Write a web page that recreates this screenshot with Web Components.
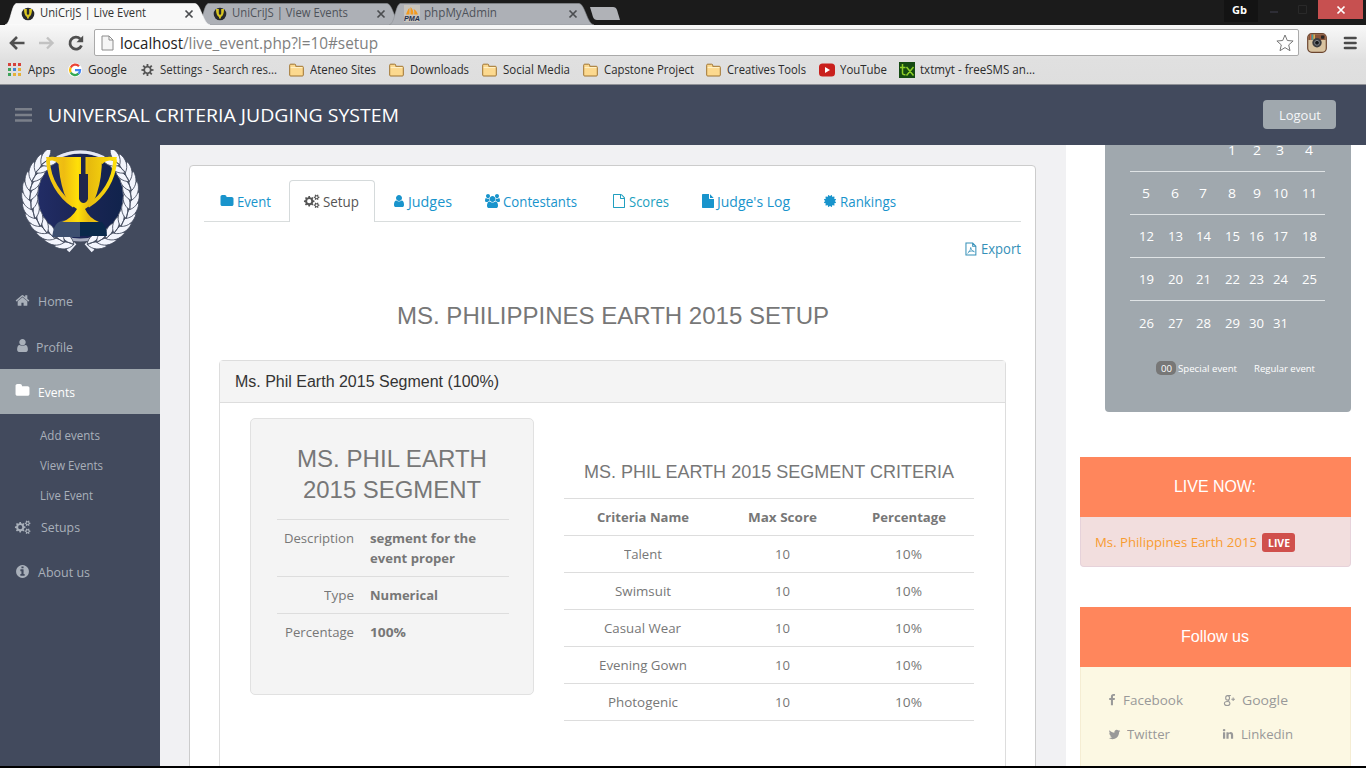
<!DOCTYPE html>
<html lang="en">
<head>
<meta charset="utf-8">
<title>UniCriJS | Live Event</title>
<style>
html,body{margin:0;height:100%;overflow:hidden;background:#000}
body{font-family:"Open Sans","Noto Sans",sans-serif;font-size:13px;color:#777}
</style>
</head>
<body>
<app-window></app-window>
<script>
const PATHS={
folder:'M1728 608v704q0 92-66 158t-158 66H288q-92 0-158-66t-66-158V352q0-92 66-158t158-66h320q92 0 158 66t66 158v32h672q92 0 158 66t66 158z',
home:'M1472 992v480q0 26-19 45t-45 19h-384v-384h-256v384h-384q-26 0-45-19t-19-45v-480q0-1 .5-3t.5-3l575-474 575 474q1 2 1 6zm223-69l-62 74q-8 9-21 11h-3q-13 0-21-7l-692-577-692 577q-12 8-24 7-13-2-21-11l-62-74q-8-10-7-23.5t11-21.5l719-599q32-26 76-26t76 26l244 204v-195q0-14 9-23t23-9h192q14 0 23 9t9 23v408l219 182q10 8 11 21.5t-7 23.5z',
user:'M1536 1399q0 109-62.5 187t-150.5 78h-854q-88 0-150.5-78t-62.5-187q0-85 8.5-160.5t31.5-152 58.5-131 94-89 134.5-34.5q131 128 313 128t313-128q76 0 134.5 34.5t94 89 58.5 131 31.5 152 8.5 160.5zm-256-887q0 159-112.5 271.5t-271.5 112.5-271.5-112.5-112.5-271.5 112.5-271.5 271.5-112.5 271.5 112.5 112.5 271.5z',
users:'M593 896q-162 5-265 128h-134q-82 0-138-40.5t-56-118.5q0-353 124-353 6 0 43.5 21t97.5 42.5 119 21.5q67 0 133-23-5 37-5 66 0 139 81 256zm1071 637q0 120-73 189.5t-194 69.5h-874q-121 0-194-69.5t-73-189.5q0-53 3.5-103.5t14-109 26.5-108.5 43-97.5 62-81 85.5-53.5 111.5-20q10 0 43 21.5t73 48 107 48 135 21.5 135-21.5 107-48 73-48 43-21.5q61 0 111.5 20t85.5 53.5 62 81 43 97.5 26.5 108.5 14 109 3.5 103.5zm-1024-1277q0 106-75 181t-181 75-181-75-75-181 75-181 181-75 181 75 75 181zm704 384q0 159-112.5 271.5t-271.5 112.5-271.5-112.5-112.5-271.5 112.5-271.5 271.5-112.5 271.5 112.5 112.5 271.5zm576 225q0 78-56 118.5t-138 40.5h-134q-103-123-265-128 81-117 81-256 0-29-5-66 66 23 133 23 59 0 119-21.5t97.5-42.5 43.5-21q124 0 124 353zm-128-609q0 106-75 181t-181 75-181-75-75-181 75-181 181-75 181 75 75 181z',
file:'M1152 512v-472q22 14 36 28l408 408q14 14 28 36h-472zm-128 32q0 40 28 68t68 28h544v1056q0 40-28 68t-68 28h-1344q-40 0-68-28t-28-68v-1600q0-40 28-68t68-28h800v544z',
fileo:'M1596 380q28 28 48 76t20 88v1152q0 40-28 68t-68 28h-1344q-40 0-68-28t-28-68v-1600q0-40 28-68t68-28h896q40 0 88 20t76 48zm-444-244v376h376q-10-29-22-41l-313-313q-12-12-41-22zm384 1528v-1024h-416q-40 0-68-28t-28-68v-416h-768v1536h1280z',
cert:'M1504 896l138 135q30 28 20 70-12 41-52 51l-188 48 53 186q12 41-19 70-29 31-70 19l-186-53-48 188q-10 40-51 52-12 2-19 2-31 0-51-22l-135-138-135 138q-28 30-70 20-41-11-51-52l-48-188-186 53q-41 12-70-19-31-29-19-70l53-186-188-48q-40-10-52-51-10-42 20-70l138-135-138-135q-30-28-20-70 12-41 52-51l188-48-53-186q-12-41 19-70 29-31 70-19l186 53 48-188q10-41 51-51 41-12 70 19l135 139 135-139q29-30 70-19 41 10 51 51l48 188 186-53q41-12 70 19 31 29 19 70l-53 186 188 48q40 10 52 51 10 42-20 70z',
info:'M1152 1376v-160q0-14-9-23t-23-9h-96v-512q0-14-9-23t-23-9h-320q-14 0-23 9t-9 23v160q0 14 9 23t23 9h96v320h-96q-14 0-23 9t-9 23v160q0 14 9 23t23 9h448q14 0 23-9t9-23zm-128-896v-160q0-14-9-23t-23-9h-192q-14 0-23 9t-9 23v160q0 14 9 23t23 9h192q14 0 23-9t9-23zm640 416q0 209-103 385.5t-279.5 279.5-385.5 103-385.5-103-279.5-279.5-103-385.5 103-385.5 279.5-279.5 385.5-103 385.5 103 279.5 279.5 103 385.5z',
facebook:'M1343 12v264h-157q-86 0-116 36t-30 108v189h293l-39 296h-254v759h-306v-759h-255v-296h255v-218q0-186 104-288.5t277-102.5q147 0 228 12z',
twitter:'M1684 408q-67 98-162 167 1 14 1 42 0 130-38 259.5t-115.5 248.5-184.5 210.5-258 146-323 54.5q-271 0-496-145 35 4 78 4 225 0 401-138-105-2-188-64.5t-114-159.5q33 5 61 5 43 0 85-11-112-23-185.5-111.5t-73.5-205.5v-4q68 38 146 41-66-44-105-115t-39-154q0-88 44-163 121 149 294.5 238.5t371.5 99.5q-8-38-8-74 0-134 94.5-228.5t228.5-94.5q140 0 236 102 109-21 205-78-37 115-142 178 93-10 186-50z',
linkedin:'M477 625v991h-330v-991h330zm21-306q1 73-50.5 122t-135.5 49h-2q-82 0-132-49t-50-122q0-74 51.5-122.5t134.5-48.5 133 48.5 51 122.5zm1166 729v568h-329v-530q0-105-40.5-164.5t-126.5-59.5q-63 0-105.5 34.5t-63.5 85.5q-11 30-11 81v553h-329q2-399 2-647t-1-296l-1-48h329v144h-2q20-32 41-56t56.5-52 87-43.5 114.5-15.5q171 0 275 113.5t104 332.5z'};
function cog(cx,cy,ri,ro,hole,n){
  let d='';const p=(r,a)=>(cx+r*Math.cos(a)).toFixed(2)+' '+(cy+r*Math.sin(a)).toFixed(2);
  for(let i=0;i<n;i++){const a=i*2*Math.PI/n,s=Math.PI/n;
    d+=(i?'L':'M')+p(ri,a-s*.6)+'L'+p(ro,a-s*.36)+'L'+p(ro,a+s*.36)+'L'+p(ri,a+s*.6);}
  return d+`ZM${cx+hole} ${cy}A${hole} ${hole} 0 1 0 ${cx-hole} ${cy}A${hole} ${hole} 0 1 0 ${cx+hole} ${cy}Z`;
}
const DRAWN={
cogs:`<path fill-rule="evenodd" d="${cog(5.2,7.2,4.1,5.3,2.1,8)}${cog(12.6,3.3,2.1,2.9,1.05,6)}${cog(12.6,11.2,2.1,2.9,1.05,6)}"/>`,
cog:`<path fill-rule="evenodd" d="${cog(8,7,4.4,6.6,2.6,8)}"/>`,
pdf:`<path fill="none" stroke="currentColor" stroke-width="1.1" d="M2.1.6h7.2l3.4 3.4v9.4H2.1zM9.3.6V4h3.4"/><path fill="none" stroke="currentColor" stroke-width=".8" d="M3.7 11.700c1.500-.7 3.200-3.200 3.500-6.400.7 3 2 4.300 4.200 4.800M4.600 10.100c2-.9 4-1.200 6.200-.7"/>`,
gplus:`<g fill="none" stroke="currentColor" stroke-width="1.25"><ellipse cx="5.3" cy="4" rx="2.2" ry="2.6"/><ellipse cx="4.8" cy="10.4" rx="3.2" ry="2.3"/><path d="M5 1.2h4M6.2 6.3l1 2M9.6 5.6h4.2M11.7 3.5v4.2"/></g>`
};
function define(name,css,html,after){
  const t=document.createElement('template');
  t.innerHTML=`<style>*{box-sizing:border-box}${css}</style>${html}`;
  customElements.define(name,class extends HTMLElement{
    connectedCallback(){
      if(this.shadowRoot)return;
      this.attachShadow({mode:'open'}).append(document.importNode(t.content,true));
      if(after)after(this,this.shadowRoot);
    }
  });
}

define('fa-icon',`:host{display:inline-block;flex:none;line-height:0}svg{display:block;width:100%;height:100%;fill:currentColor;overflow:visible}`,`<svg></svg>`,(el,r)=>{
  const n=el.getAttribute('name'),s=+(el.getAttribute('size')||14),w=n==='users'?1920:1792,svg=r.querySelector('svg');
  el.style.width=(PATHS[n]?s*w/1792:n==='cogs'?s*16/14:s)+'px';el.style.height=s+'px';
  svg.setAttribute('viewBox',PATHS[n]?`0 0 ${w} 1792`:n==='cogs'?'0 0 16 14':'0 0 15 14');
  svg.innerHTML=PATHS[n]?`<path d="${PATHS[n]}"/>`:DRAWN[n];
});

define('trophy-mark',`:host{display:block;width:14px;height:14px;flex:none}svg{display:block;width:100%;height:100%}`,
`<svg viewBox="0 0 14 14"><circle cx="7" cy="7" r="6.3" fill="#26282d"/><path d="M3 2h2.8v4.6a1.2 1.2 0 0 0 2.4 0V2H11c0 4.500-1 7-3.100 8v1.500H6V10C4 9 3 6.500 3 2z" fill="#d8c521"/></svg>`);

define('browser-tab',`:host{display:flex;position:relative;width:205px;height:22px;margin-left:-13px;flex:none;align-items:center;color:#4d5259;font-size:12px;--dy:-.6px}
:host(:first-of-type){margin-left:0}:host([active]){z-index:2;color:#333}
.bg{position:absolute;inset:0;width:205px;height:22px}.bg path{fill:#adb0b6;stroke:#8d9096;stroke-width:.6}
:host([active]) .bg path{fill:#f8f8f8;stroke:#fff}
.c{position:relative;display:flex;align-items:center;width:100%;padding:0 15px 1px 16px;gap:5px}.x{margin-left:auto;width:12px;height:12px}.x path{stroke:#4b4d50;stroke-width:1.7}`,
`<svg class="bg" viewBox="0 0 205 22"><path d="M0 22C6 21 6 3 11 .5H190C196 1 198 21 205 22z"/></svg><div class="c"><slot name="icon"></slot><slot></slot><svg class="x" viewBox="0 0 12 12"><path d="M2.500 2.500l7 7M9.500 2.500l-7 7"/></svg></div>`);

define('bookmark-item',`:host{display:flex;align-items:center;flex:none;gap:var(--gap,6px);margin-left:var(--ml,13px)}svg{display:none;flex:none}:host([folder]) svg{display:block}`,
`<slot name="icon"></slot><svg width="15" height="14" viewBox="0 0 15 14"><path d="M.7 12V2.200q0-1 1-1h4q1 0 1 1V3.300h6.600q1 0 1 1V12q0 1-1 1H1.700q-1 0-1-1z" fill="#fcd98f" stroke="#a07430"/><path d="M1.700 4.600h11.600" stroke="#fff2cc"/></svg><slot></slot>`);

define('browser-chrome',`:host{display:flex;flex-direction:column;height:85px;color:#2b2b2b;font-size:12px;background:linear-gradient(#f8f8f8 25px,#e0e0e0 60px,#dedede 84px)}
.strip{display:flex;height:25px;background:#1b1b1b;padding:3px 3px 0 5px;flex:none}
.new{width:31px;height:15px;margin:3px 0 0 -5px}
.win{margin:-3px 0 0 auto;display:flex;height:19px;color:#fff}
.gb{width:34px;height:22px;background:#131313;font-weight:700;font-size:11px;display:flex;justify-content:center;align-items:center;padding-bottom:3px}
.dim{width:29px;height:19px}.dim+.dim{width:31px}.close{width:45px;height:19px;background:#c75050;display:grid;place-items:center}
.bar{display:flex;height:32px;flex:none;align-items:center;padding:3px 9px 0 8px}
.nav{display:block;flex:none}
.url{flex:none;width:1205px;height:27px;margin-left:9px;border:1px solid #aaa;border-radius:2px;background:#fff;display:flex;align-items:center;padding:0 4px 0 6px;font-size:16px;color:#808080;--dy:-.5px}
.url b{font-weight:400;color:#222}.url .star{margin-left:auto}
.ext{margin-left:8px}.menu{margin-left:16px}
.marks{display:flex;align-items:center;height:28px;flex:1;padding:0 0 2px 8px;border-bottom:1px solid #8f9196}`,
`<div class="strip">
<browser-tab active><trophy-mark slot="icon"></trophy-mark><fit-text w="106">UniCriJS | Live Event</fit-text></browser-tab>
<browser-tab><trophy-mark slot="icon"></trophy-mark><fit-text w="116">UniCriJS | View Events</fit-text></browser-tab>
<browser-tab><svg slot="icon" width="16" height="17" viewBox="0 0 16 17" style="margin:0 -1px 0 -1px"><rect width="16" height="17" fill="#c8c4bd"/><path d="M2 9.500C3 7 4 4 5.500 3v6.500zM6.500 9.500V2C9 4 9.500 7 9.300 9.500zM10.200 9.500C10.500 7 10 5 9.500 4c2.500 1 3.500 3 4.500 5.500z" fill="#f29a1f"/><text x="0" y="16" font-family="Liberation Sans" font-weight="700" font-style="italic" font-size="6.800" fill="#25304f" textLength="16" lengthAdjust="spacingAndGlyphs">PMA</text></svg><fit-text w="73">phpMyAdmin</fit-text></browser-tab>
<svg class="new" viewBox="0 0 31 15"><path d="M1 1h23q3 0 4 3l3 10H8q-3 0-4-3z" fill="#b0b2b7"/></svg>
<div class="win"><div class="gb"><fit-text w="15" style="margin-right:3px">Gb</fit-text></div><svg class="dim" viewBox="0 0 29 19"><path d="M12 12h8" stroke="#2d2d35" stroke-width="2"/></svg><svg class="dim" viewBox="0 0 29 19"><path d="M10.500 5.500h8v8h-8z" fill="none" stroke="#292929"/></svg><div class="close"><svg width="10" height="10" viewBox="0 0 10 10"><path d="M1.500 1.500l7 7M8.500 1.500l-7 7" stroke="#fff" stroke-width="1.700"/></svg></div></div>
</div>
<div class="bar">
<svg class="nav" width="18" height="16" viewBox="0 0 18 16"><path d="M16.500 8H3.500M9 2L3 8l6 6" fill="none" stroke="#505050" stroke-width="2.600"/></svg>
<svg class="nav" style="margin-left:13px" width="16" height="16" viewBox="0 0 16 16"><path d="M0 8h13M8 2.500L13.500 8 8 13.500" fill="none" stroke="#c2c2c2" stroke-width="2.400"/></svg>
<svg class="nav" style="margin-left:12px" width="18" height="18" viewBox="0 0 18 18"><path d="M14.500 11.500A6 6 0 1 1 13.300 5" fill="none" stroke="#4f4f4f" stroke-width="2.800"/><path d="M16.200 1.500v6.800H9.500z" fill="#4f4f4f"/></svg>
<div class="url"><svg width="13" height="16" viewBox="0 0 13 16" style="margin-right:6px"><path d="M1 1h7l4 4v10H1zM8 1v4h4" fill="#f5f5f5" stroke="#8c8c8c"/></svg><b><fit-text w="63">localhost</fit-text></b><fit-text w="195">/live_event.php?l=10#setup</fit-text>
<svg class="star" width="18" height="18" viewBox="0 0 18 18"><path d="M9 1l2.300 5.500 5.800.5-4.400 3.900 1.300 5.800L9 13.600l-5 3.100 1.300-5.800L.9 7l5.800-.5z" fill="#fff" stroke="#777" stroke-linejoin="round"/></svg></div>
<svg class="ext" width="20" height="20" viewBox="0 0 20 20"><rect x=".7" y=".7" width="18.600" height="18.600" rx="4" fill="#d8c3a0" stroke="#6c4630" stroke-width="1.200"/><path d="M1.300 7V4q0-2.700 3-2.700h11.400q3 0 3 2.700v3z" fill="#89543a"/><path d="M3 1.500h1.400V7H3z" fill="#d65d3d"/><path d="M4.400 1.500h2V7h-2z" fill="#4e9a9a"/><path d="M6.400 1.500H8V7H6.400z" fill="#d9b052"/><rect x="14" y="2.500" width="3.300" height="3.300" rx=".8" fill="#2a2523"/><circle cx="10" cy="9.800" r="4.700" fill="#3d3d40"/><circle cx="10" cy="9.800" r="2.400" fill="#15171a" stroke="#82878d"/></svg>
<svg class="menu" width="14" height="14" viewBox="0 0 14 14"><path d="M2 2h10.500M2 7h10.500M2 12h10.500" stroke="#4a4a4a" stroke-width="2.700" stroke-linecap="round"/></svg>
</div>
<div class="marks">
<bookmark-item style="--ml:0px"><svg slot="icon" width="14" height="14" viewBox="0 0 14 14"><g fill="#d5423b"><path d="M0 0h3v3H0zM5 0h3v3H5zM10 0h3v3h-3z"/></g><path d="M0 5h3v3H0z" fill="#3fa35b"/><path d="M5 5h3v3H5z" fill="#4285d4"/><path d="M10 5h3v3h-3zM5 10h3v3H5zM10 10h3v3h-3z" fill="#e5b13a"/><path d="M0 10h3v3H0z" fill="#3fa35b"/></svg><fit-text w="27">Apps</fit-text></bookmark-item>
<bookmark-item><svg slot="icon" width="14" height="14" viewBox="0 0 14 14"><circle cx="7" cy="7" r="7" fill="#fff"/><g fill="none" stroke-width="2.300"><path d="M11 3.200A5 5 0 0 0 2.700 4.600" stroke="#ea4335"/><path d="M2.700 4.600a5 5 0 0 0 0 4.900" stroke="#fbbc05"/><path d="M2.700 9.500A5 5 0 0 0 10.500 10.700" stroke="#34a853"/><path d="M10.500 10.700A5 5 0 0 0 12 7.200H7" stroke="#4285f4"/></g></svg><fit-text w="39">Google</fit-text></bookmark-item>
<bookmark-item style="--ml:13px;--gap:6px;color:#333"><fa-icon slot="icon" name="cog" style="color:#555"></fa-icon><fit-text w="117">Settings - Search res...</fit-text></bookmark-item>
<bookmark-item folder style="--ml:12px"><fit-text w="66">Ateneo Sites</fit-text></bookmark-item>
<bookmark-item folder><fit-text w="59">Downloads</fit-text></bookmark-item>
<bookmark-item folder><fit-text w="67">Social Media</fit-text></bookmark-item>
<bookmark-item folder><fit-text w="90">Capstone Project</fit-text></bookmark-item>
<bookmark-item folder style="--ml:12px"><fit-text w="79">Creatives Tools</fit-text></bookmark-item>
<bookmark-item style="--gap:5px"><svg slot="icon" width="16" height="16" viewBox="0 0 16 16"><rect y="1.500" width="16" height="13" rx="3.500" fill="#c9201d"/><path d="M6 5l5 3-5 3z" fill="#fff"/></svg><fit-text w="47">YouTube</fit-text></bookmark-item>
<bookmark-item style="--ml:12px;--gap:5px"><svg slot="icon" width="16" height="16" viewBox="0 0 16 16"><rect width="16" height="16" fill="#154a12"/><path d="M3.500 2v9q0 2 3 1.800M1 5.500h5.500M7.500 5l7 8.500M14.500 5l-7 8.500" stroke="#8fd028" stroke-width="1.500" fill="none"/></svg><fit-text w="115">txtmyt - freeSMS an...</fit-text></bookmark-item>
</div>`);

define('app-header',`:host{display:flex;align-items:center;height:60px;background:#424a5d;color:#fff;padding:0 30px 1px 15px;font-size:19px;--dy:-.5px}
.btn{margin-left:auto;width:73px;height:29px;border-radius:4px;background:#a0a8ae;display:grid;place-items:center;font-size:13px;color:#f4f6f8;--dy:0px}`,
`<svg width="17" height="14" viewBox="0 0 17 14" style="margin-right:16px"><path d="M0 1.300h17M0 7h17M0 12.500h17" stroke="#7b808a" stroke-width="2.400"/></svg><fit-text w="351">UNIVERSAL CRITERIA JUDGING SYSTEM</fit-text><div class="btn"><fit-text w="42">Logout</fit-text></div>`);

define('trophy-crest',`:host{display:block;width:118px;height:104px}svg{display:block}`,
`<svg width="118" height="104" viewBox="0 0 118 104"><defs><linearGradient id="n" x1="0" x2="1"><stop stop-color="#222d66"/><stop offset=".5" stop-color="#1b2555"/><stop offset="1" stop-color="#10234c"/></linearGradient><linearGradient id="y" gradientUnits="userSpaceOnUse" x1="25" y1="0" x2="96" y2="0"><stop stop-color="#f6cf10"/><stop offset=".25" stop-color="#eebc12"/><stop offset=".45" stop-color="#ffe008"/><stop offset=".6" stop-color="#e6b90e"/><stop offset="1" stop-color="#ffe20c"/></linearGradient></defs>
<circle cx="59.500" cy="46" r="44" fill="url(#n)" stroke="#a9aec0" stroke-width="3"/><path d="M36 7.500q23-11 47 0" fill="none" stroke="#e6e9f5" stroke-width="3"/>
<path d="M54 93l-7 8M65 93l7 8" fill="none" stroke="#eef1fb" stroke-width="3.600"/>
<g id="wreath"></g>
<path d="M32 82q2-12 14-12h13v17H31z" fill="#3d4f70"/><path d="M59 72h22q5 6 5 14H59z" fill="#09294b"/>
<path d="M39 13C36 8 27 7 27 11C28 29 38 46 53 56M80 13C83 8 94 7 94 11C93 29 83 46 67 56" fill="none" stroke="url(#y)" stroke-width="3.800"/><path d="M25 7h14v3H26zM80 7h16l-1 3H80z" fill="url(#y)"/>
<path d="M37 7H81Q81 28 76 43Q73 54 64 59Q68 68 78 72H41Q51 68 56 59Q47 54 43 43Q38 28 37 7z" fill="url(#y)"/>
<path d="M60 6.500h4.500V24h2.500v25q-1.500 4-4.500 4T58 49V24h2z" fill="#20264c"/></svg>`,(el,r)=>{
  let s='';
  for(let i=0;i<12;i++){
    const deg=106+i*11.200,a=deg*Math.PI/180,cx=59+49.500*Math.cos(a),cy=46+47.500*Math.sin(a);
    s+=`<g transform="translate(${cx} ${cy}) rotate(${deg+184})"><path d="M0 8C-7 5-10-2-8.500-10C-2-7 1 0 0 8zM0 8C-1 2 1-5 6-9C9-3 6 5 0 8z"/></g>`;
  }
  r.querySelector('#wreath').innerHTML=`<g fill="#f3f5fd" stroke="#424a5d" stroke-width=".8">${s}<g transform="translate(119 0) scale(-1 1)">${s}</g></g>`;
});

define('side-item',`:host{display:flex;align-items:center;height:45px;padding-left:14.500px;color:#a9b0ba;font-size:13px}:host([up]){--dy:-1px}:host([active]){background:#a0a8ae;color:#fff}:host([sub]){height:30px;padding-left:40px;font-size:12px;--dy:-1px}fa-icon{margin-top:-2px}`,`<slot></slot>`,(el,r)=>{
  const n=el.getAttribute('icon');
  if(n){const i=document.createElement('fa-icon');i.setAttribute('name',n);i.setAttribute('size',n==='cogs'?14:15);i.style.marginRight=(el.getAttribute('gap')||8.500)+'px';r.insertBefore(i,r.querySelector('slot'));}
});
define('app-sidebar',`:host{display:block;width:160px;background:#424a5d;height:100%}
trophy-crest{margin:5px 0 0 21px}nav{margin-top:25px}.sub{height:91px;padding-top:7px}`,
`<trophy-crest></trophy-crest><nav>
<side-item icon="home" up><fit-text w="35">Home</fit-text></side-item>
<side-item icon="user" gap="6.500"><fit-text w="37">Profile</fit-text></side-item>
<side-item icon="folder" active><fit-text w="37">Events</fit-text></side-item>
<div class="sub"><side-item sub><fit-text w="60">Add events</fit-text></side-item><side-item sub><fit-text w="63">View Events</fit-text></side-item><side-item sub><fit-text w="53">Live Event</fit-text></side-item></div>
<side-item icon="cogs" gap="10" up><fit-text w="39">Setups</fit-text></side-item>
<side-item icon="info" gap="8" up><fit-text w="52">About us</fit-text></side-item></nav>`);

define('nav-tab',`:host{display:flex;align-items:center;height:42px;padding:0 16px 1px;gap:4px;color:#1994cc;font-size:14px;flex:none;margin-right:2px;border:1px solid transparent;border-bottom:0;--dy:-.5px}
:host([active]){color:#555;background:#fff;border-color:#d5dadb;border-radius:4px 4px 0 0}`,`<slot></slot>`);

define('detail-row',`:host{display:grid;grid-template-columns:77px 1fr;column-gap:16px;padding:8px 8px 8px 0;border-top:1px solid #ddd;line-height:20px;font-size:13px}
dt,dd{margin:0}dt{text-align:right}dd{font-weight:700;display:flex;flex-direction:column;align-items:flex-start}`,`<dt><slot name="label"></slot></dt><dd><slot></slot></dd>`);

define('segment-card',`:host{display:block;width:284px;height:277px;background:#f4f4f4;border:1px solid #e1e1e1;border-radius:5px;padding:24px 24px 0 26px}
h2{margin:0 1px 14px -1px;font:400 24px/31px "Liberation Sans",Arial,sans-serif;text-align:center;color:#777}`,
`<h2><fit-text w="190">MS. PHIL EARTH</fit-text><br><fit-text w="178">2015 SEGMENT</fit-text></h2>
<detail-row><fit-text slot="label" w="70">Description</fit-text><fit-text w="106">segment for the</fit-text><fit-text w="85">event proper</fit-text></detail-row>
<detail-row><fit-text slot="label" w="30">Type</fit-text><fit-text w="68">Numerical</fit-text></detail-row>
<detail-row><fit-text slot="label" w="69">Percentage</fit-text><fit-text w="36">100%</fit-text></detail-row>`);

define('criteria-table',`:host{display:block;width:410px;font-size:13px}h3{margin:1px 0 15px;font:400 18px/22px "Liberation Sans",Arial,sans-serif;text-align:center;color:#777}
.row{display:grid;grid-template-columns:157px 122px 131px;height:37px;align-items:center;justify-items:center;border-top:1px solid #ddd}.row:last-child{border-bottom:1px solid #ddd;height:38px}.h{font-weight:700}`,
`<h3><fit-text w="370">MS. PHIL EARTH 2015 SEGMENT CRITERIA</fit-text></h3>
<div class="row h"><fit-text w="92">Criteria Name</fit-text><fit-text w="69">Max Score</fit-text><fit-text w="74">Percentage</fit-text></div>
<div class="row"><fit-text w="38">Talent</fit-text><fit-text w="15">10</fit-text><fit-text w="27">10%</fit-text></div>
<div class="row"><fit-text w="56">Swimsuit</fit-text><fit-text w="15">10</fit-text><fit-text w="27">10%</fit-text></div>
<div class="row"><fit-text w="77">Casual Wear</fit-text><fit-text w="15">10</fit-text><fit-text w="27">10%</fit-text></div>
<div class="row"><fit-text w="88">Evening Gown</fit-text><fit-text w="15">10</fit-text><fit-text w="27">10%</fit-text></div>
<div class="row"><fit-text w="70">Photogenic</fit-text><fit-text w="15">10</fit-text><fit-text w="27">10%</fit-text></div>`);

define('event-panel',`:host{display:block;height:100%;background:#f1f1f3;padding:20px 30px 0 29px;overflow:hidden}
.card{height:620px;border:1px solid #ccc;border-radius:4px;background:#fff;padding:14px 14px 0}
.tabs{display:flex;height:42px;border-bottom:1px solid #d9dddd}
.export{display:flex;justify-content:flex-end;align-items:center;gap:4px;height:20px;margin-top:17px;color:#3590b8;font-size:14px;--dy:-1px}
h1{margin:43px 0 30px;height:28px;font:400 24px/28px "Liberation Sans",Arial,sans-serif;text-align:center;color:#777}
.panel{margin:0 15px;border:1px solid #ddd;border-radius:4px;height:500px}
.head{height:42px;background:#f4f4f4;border-bottom:1px solid #ddd;padding:0 15px;display:flex;align-items:center;font:400 16px "Liberation Sans",Arial,sans-serif;color:#333}
.body{display:flex;padding:15px 31px 0 30px;justify-content:space-between}criteria-table{margin-top:42px}`,
`<div class="card"><div class="tabs">
<nav-tab style="margin-right:1px;padding-right:16px;padding-left:15px;width:84px;gap:3px"><fa-icon name="folder" size="14"></fa-icon><fit-text w="34">Event</fit-text></nav-tab>
<nav-tab active style="padding-right:14px;padding-left:14px;gap:3px;width:86px"><fa-icon name="cogs" size="14"></fa-icon><fit-text w="36">Setup</fit-text></nav-tab>
<nav-tab style="padding-right:13px;padding-left:14px"><fa-icon name="user"></fa-icon><fit-text w="44" style="margin-left:-2px">Judges</fit-text></nav-tab>
<nav-tab style="gap:3px;padding-right:15px"><fa-icon name="users"></fa-icon><fit-text w="74">Contestants</fit-text></nav-tab>
<nav-tab style="color:#219fc0;padding-right:14px"><fa-icon name="fileo" style="margin-right:-1px"></fa-icon><fit-text w="40">Scores</fit-text></nav-tab>
<nav-tab style="padding-right:13px;padding-left:14px"><fa-icon name="file" style="margin-right:-2px"></fa-icon><fit-text w="73">Judge's Log</fit-text></nav-tab>
<nav-tab><fa-icon name="cert" style="margin-right:-1px"></fa-icon><fit-text w="56">Rankings</fit-text></nav-tab>
</div><div class="export"><fa-icon name="pdf" style="width:14px;margin-right:-1px"></fa-icon><fit-text w="40">Export</fit-text></div>
<h1><fit-text w="432">MS. PHILIPPINES EARTH 2015 SETUP</fit-text></h1>
<div class="panel"><div class="head"><fit-text w="264">Ms. Phil Earth 2015 Segment (100%)</fit-text></div><div class="body"><segment-card></segment-card><criteria-table></criteria-table></div></div></div>`);

define('month-calendar',`:host{display:block;width:246px;height:267px;margin-left:39px;background:#a0a8ae;color:#fff;border-radius:0 0 4px 4px;overflow:hidden;padding:0 26px 0 25px;font-size:13.500px;--dy:-.5px}
.g{margin-top:-16px;line-height:10px}.w{display:grid;grid-template-columns:32px 26px 30px 28px 21px 26px 32px;height:43px;border-bottom:1px solid #dfe3e5;align-items:center;justify-items:center}.w:last-child{border:0}
.l{display:flex;align-items:center;margin:17px 0 0 26px;font-size:9.500px;--dy:0px}.p{background:#777;border-radius:5px;width:20px;height:14px;display:grid;place-items:center;margin-right:2px}`,
`<div class="g"></div><div class="l"><span class="p"><fit-text w="11">00</fit-text></span><fit-text w="59">Special event</fit-text><fit-text w="61" style="margin-left:17px">Regular event</fit-text></div>`,(el,r)=>{
  let h='';for(let w=0;w<5;w++){h+='<div class="w">';for(let d=0;d<7;d++){const n=w*7+d-2;h+=n>0&&n<32?`<fit-text w="${n<10?8:15}">${n}</fit-text>`:'<i></i>';}h+='</div>';}
  r.querySelector('.g').innerHTML=h;
});

define('promo-box',`:host{display:block;width:271px;margin-left:14px}header{height:60px;background:#ff865c;color:#fff;display:grid;place-items:center;padding-right:2px;font:400 16px "Liberation Sans",Arial,sans-serif}`,`<header><slot name="title"></slot></header><slot></slot>`);

define('side-rail',`:host{display:block;width:300px;height:100%;background:#fff;overflow:hidden}
.live{height:50px;background:#f2dede;border:1px solid #e6d2da;border-top:0;border-radius:0 0 4px 4px;display:flex;align-items:center;padding:2px 0 0 14px;color:#f89c31;font-size:13.500px;--dy:-1px}
.tag{background:#d0504c;color:#fff;font-weight:700;font-size:11px;border-radius:3px;width:33px;height:19px;display:grid;place-items:center;margin-left:5px;--dy:0px}
.social{height:120px;background:#fcf8e3;border:1px solid #f5edd3;border-top:0;display:grid;grid-template-columns:115px 1fr;grid-auto-rows:34px;padding:16px 0 0 27px;color:#999;font-size:13px}
.s{display:flex;align-items:center}fa-icon{margin-right:7px}`,
`<month-calendar></month-calendar>
<promo-box style="margin-top:45px"><fit-text slot="title" w="82">LIVE NOW:</fit-text><div class="live"><fit-text w="162">Ms. Philippines Earth 2015</fit-text><span class="tag"><fit-text w="22">LIVE</fit-text></span></div></promo-box>
<promo-box style="margin-top:40px"><fit-text slot="title" w="68">Follow us</fit-text><div class="social">
<div class="s"><fa-icon name="facebook" size="12" style="margin:0 4px 0 -2px"></fa-icon><fit-text w="60" style="margin-left:1px">Facebook</fit-text></div><div class="s"><fa-icon name="gplus" size="13" style="margin-right:6px"></fa-icon><fit-text w="46">Google</fit-text></div>
<div class="s"><fa-icon name="twitter" size="13" style="margin-right:6px"></fa-icon><fit-text w="43">Twitter</fit-text></div><div class="s"><fa-icon name="linkedin" size="12" style="margin:0 7px 0 -1px"></fa-icon><fit-text w="52">Linkedin</fit-text></div></div></promo-box>`);

define('app-window',`:host{display:grid;width:1366px;height:768px;grid-template-rows:85px 60px 621px 2px;background:#000;overflow:hidden}main{display:grid;grid-template-columns:160px 906px 300px;overflow:hidden}`,
`<browser-chrome></browser-chrome><app-header></app-header><main><app-sidebar></app-sidebar><event-panel></event-panel><side-rail></side-rail></main>`);

/* A single line of text condensed or widened to the width in its "w" attribute; --dy nudges its baseline. */
define('fit-text',`:host{display:inline-block;white-space:nowrap;flex:none}span{display:inline-block;transform-origin:0 50%}`,`<span><slot></slot></span>`,(el,r)=>{
  const s=r.querySelector('span'),w=+el.getAttribute('w'),n=s.getBoundingClientRect().width;
  el.style.width=w+'px';el.style.textAlign='left';
  if(n)s.style.transform=`translateY(var(--dy,0px)) scaleX(${w/n})`;
});
</script>
</body>
</html>
